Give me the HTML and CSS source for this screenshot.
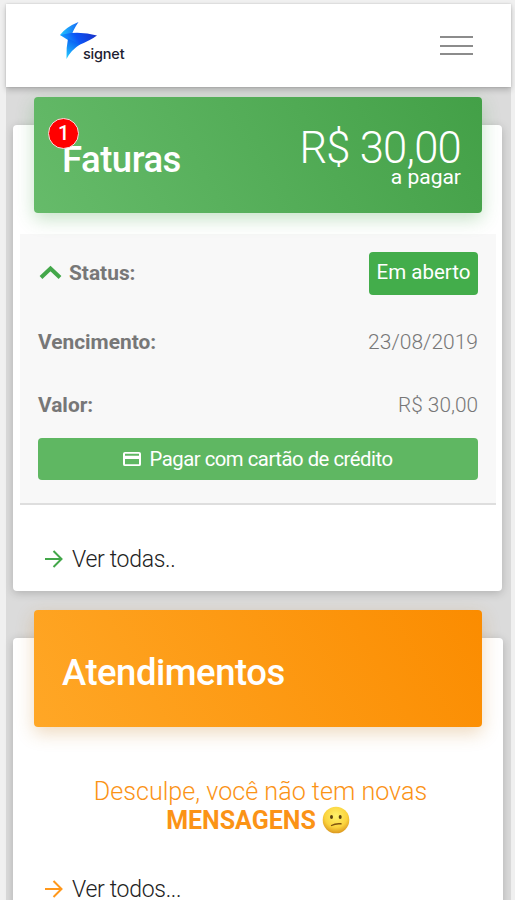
FILE: index.html
```
<!DOCTYPE html>
<html lang="pt-BR">
<head>
<meta charset="utf-8">
<title>Signet</title>
<link rel="stylesheet" href="styles.css">
</head>
<body>
<div class="app">
  <header class="topbar">
    <div class="brand">
      <svg class="brand-mark" width="40" height="40" viewBox="0 0 40 40">
        <defs>
          <linearGradient id="wing" x1="0" y1="0" x2="1" y2="0"><stop offset="0" stop-color="#20c8ff"/><stop offset="1" stop-color="#1768f5"/></linearGradient>
          <linearGradient id="body" x1="1" y1="0" x2="0" y2="0.2"><stop offset="0" stop-color="#1a2ec4"/><stop offset=".6" stop-color="#0c55f5"/><stop offset="1" stop-color="#14a0ff"/></linearGradient>
          <linearGradient id="tail" x1="0.6" y1="0" x2="0.2" y2="1"><stop offset="0" stop-color="#0755f2"/><stop offset="1" stop-color="#24c9ff"/></linearGradient>
        </defs>
        <path d="M19.500 1Q7 6 1 14L12 16Q14 9 19.500 1Z" fill="url(#wing)"/>
        <path d="M1 14L12 12Q26 11 38 14.500Q32 19 20 24L9 19Z" fill="url(#body)"/>
        <path d="M9 17.500L21 23.500Q12 29 7.500 38Q7 27 9 17.500Z" fill="url(#tail)"/>
      </svg>
      <span class="brand-name">signet</span>
    </div>
    <div class="menu"><i></i><i></i><i></i></div>
  </header>

  <main>
    <section class="card invoices">
      <div class="banner green">
        <h2>Faturas<span class="badge">1</span></h2>
        <div class="total"><span class="amount">R$ 30,00</span><span class="due">a pagar</span></div>
      </div>
      <div class="details">
        <div class="row status">
          <div class="label"><svg width="23" height="15" viewBox="0 0 23 15"><path d="M2 12.5L11.5 3.5L21 12.5" fill="none" stroke="#43a74a" stroke-width="4"/></svg><b>Status:</b></div>
          <span class="tag">Em aberto</span>
        </div>
        <div class="row date"><b>Vencimento:</b><span class="date-value">23/08/2019</span></div>
        <div class="row value"><b>Valor:</b><span class="money">R$ 30,00</span></div>
        <div class="pay">
          <svg width="18" height="14" viewBox="0 0 18 15" preserveAspectRatio="none"><path fill-rule="evenodd" d="M2 0H16Q18 0 18 2V13Q18 15 16 15H2Q0 15 0 13V2Q0 0 2 0ZM2 2V4H16V2ZM2 7.5V13H16V7.5Z" fill="#fff"/></svg>
          <span>Pagar com cartão de crédito</span>
        </div>
      </div>
      <div class="more"><svg class="arrow green-arrow" width="18" height="18" viewBox="0 0 18 18"><path d="M0 9H16M8.5 1L16.5 9L8.5 17"/></svg><span>Ver todas..</span></div>
    </section>

    <section class="card support">
      <div class="banner orange"><h2>Atendimentos</h2></div>
      <div class="empty">
        <p class="sorry">Desculpe, você não tem novas</p>
        <p class="messages"><b>MENSAGENS</b>
          <svg width="28" height="28" viewBox="0 0 28 28">
            <defs><radialGradient id="face" cx=".5" cy=".35" r=".65"><stop offset="0" stop-color="#fff26b"/><stop offset=".65" stop-color="#fbd33d"/><stop offset="1" stop-color="#dc981f"/></radialGradient></defs>
            <circle cx="14" cy="14" r="13.3" fill="url(#face)"/>
            <ellipse cx="9.5" cy="11" rx="1.5" ry="2" fill="#5d4212"/><ellipse cx="18.2" cy="11" rx="1.5" ry="2" fill="#5d4212"/>
            <path d="M9.5 19.5Q13.5 17.2 19 17.8" fill="none" stroke="#80550f" stroke-width="1.4" stroke-linecap="round"/>
          </svg>
        </p>
      </div>
      <div class="more"><svg class="arrow orange-arrow" width="18" height="18" viewBox="0 0 18 18"><path d="M0 9H16M8.5 1L16.5 9L8.5 17"/></svg><span>Ver todos...</span></div>
    </section>
  </main>
</div>
</body>
</html>
```
FILE: styles.css
```
* { box-sizing: border-box; }
body { margin: 0; height: 900px; overflow: hidden; background: #f0f0f0; font-family: Roboto, sans-serif; color: #777; }
h2, p { margin: 0; }
b { font-weight: 700; }
svg { display: block; flex: none; }
.app { width: 505px; height: 900px; margin-left: 6px; padding-top: 4px; }
.topbar { position: relative; z-index: 2; height: 83px; background: #fff; box-shadow: 0 3px 6px rgba(0,0,0,.2), 0 0 2px rgba(0,0,0,.15); display: flex; justify-content: space-between; padding: 17px 38px 0 53px; }
.brand { display: flex; }
.brand-name { margin: 23px 0 0 -16px; font: 500 14.5px/20px Inter, sans-serif; letter-spacing: -.2px; color: #202030; }
.menu { display: flex; flex-direction: column; gap: 6.5px; padding-top: 15px; }
.menu i { width: 33px; height: 2px; background: #8c8c8c; }
main { height: 813px; background: #dbdbdb; padding: 38px 8px 0 7px; display: flex; flex-direction: column; gap: 47px; }
.card { background: #fff; border-radius: 4px; box-shadow: 0 2px 10px rgba(0,0,0,.2); flex: none; }
.invoices { width: 489px; height: 466px; }
.support { width: 490px; height: 300px; }
.banner { position: relative; z-index: 1; width: 448px; height: 116px; margin: 0 0 0 21px; transform: translateY(-28px); border-radius: 4px; color: #fff; display: flex; justify-content: space-between; padding: 0 21px 0 28px; }
.support .banner { height: 117px; }
.green { background: linear-gradient(60deg, #66bb6a, #43a047); box-shadow: 0 6px 18px rgba(67,160,71,.3); }
.orange { background: linear-gradient(60deg, #ffa726, #fb8c00); box-shadow: 0 6px 18px rgba(200,130,40,.3); }
.banner h2 { position: relative; font-weight: 500; font-size: 36.5px; line-height: 44px; padding-top: 41px; letter-spacing: -.5px; }
.badge { position: absolute; left: -14px; top: 21px; width: 31px; height: 31px; border: 1.5px solid #f5dede; border-radius: 50%; background: #f00; font-weight: 500; font-size: 20px; line-height: 28px; text-align: center; }
.total { display: flex; flex-direction: column; align-items: flex-end; }
.amount { font-size: 43.5px; line-height: 36px; margin-top: 34px; letter-spacing: -.7px; font-weight: 350; }
.due { font-size: 21px; line-height: 21px; }
.details { width: 476px; height: 271px; margin: -7px 0 0 7px; background: #f8f8f8; border-bottom: 2px solid #dedede; padding: 18px 18px 0; font-size: 20.5px; }
.row { display: flex; justify-content: space-between; align-items: center; font-weight: 300; }
.row b { font-size: 20.9px; }
.label { display: flex; align-items: center; gap: 7px; padding-left: 1px; }
.status { height: 43px; }
.status .label { margin-top: -2px; }
.tag { width: 109px; height: 43px; border-radius: 4px; background: #43ad4b; color: #fff; font-weight: 400; line-height: 41px; text-align: center; }
.date { height: 32px; margin-top: 31px; }
.date-value { font-size: 21px; }
.value { height: 32px; margin-top: 31px; }
.money { font-size: 20.8px; }
.pay { height: 42px; margin-top: 17px; border-radius: 4px; background: #5fb762; color: #fff; display: flex; justify-content: center; align-items: center; gap: 8px; font-size: 20.3px; letter-spacing: -.48px; }
.more { display: flex; align-items: center; gap: 9px; height: 32px; padding-left: 32px; font-size: 23px; letter-spacing: -.3px; font-weight: 300; color: #222; }
.invoices .more { margin-top: 38px; }
.arrow path { fill: none; stroke-width: 2; }
.green-arrow { stroke: #43a74a; }
.orange-arrow { stroke: #ff981c; }
.empty { color: #fb9316; font-size: 25.15px; line-height: 29px; padding-top: 22px; font-weight: 300; }
.sorry { text-align: center; padding-left: 5px; }
.messages { display: flex; justify-content: center; gap: 6px; }
.messages b { font-size: 25px; }
.support .more { margin-top: 38px; }
```
